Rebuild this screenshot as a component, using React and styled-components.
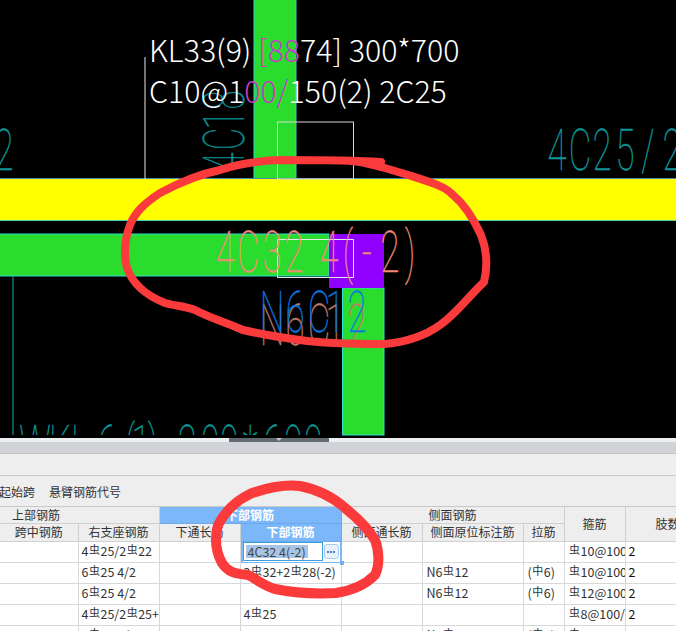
import React from "react";
import styled, { createGlobalStyle } from "styled-components";

const Global = createGlobalStyle`
  html, body { margin: 0; padding: 0; background: #fff; }
  body { font-family: "Noto Sans CJK SC", "Noto Sans", sans-serif; }
`;
const Page = styled.div`
  position: relative;
  width: 676px;
  height: 631px;
  overflow: hidden;
  display: flex;
  flex-direction: column;
`;
const Canvas = styled.svg`
  display: block;
  flex: none;
  width: 676px;
  height: 438px;
  background: #000;
`;
const Splitter = styled.div`
  flex: none;
  height: 4px;
  background: #eeeff1;
  display: flex;
  justify-content: center;
  padding-right: 118px;
`;
const Grip = styled.div`
  width: 100px;
  height: 4px;
  background: #626a72;
  display: flex;
  justify-content: center;
`;
const GripArrow = styled.div`
  width: 0;
  height: 0;
  border-left: 3px solid transparent;
  border-right: 3px solid transparent;
  border-top: 3px solid #c4c6ca;
`;
const TabStrip = styled.div`
  flex: none;
  height: 11px;
  background: #d2d3d8;
  border-bottom: 1px solid #c4c4c4;
`;
const Band = styled.div`
  flex: none;
  height: 21px;
  background: #efefef;
  border-bottom: 1px solid #c8c8c8;
`;
const Toolbar = styled.div`
  flex: none;
  height: 30px;
  background: #eeeeee;
  border-bottom: 1px solid #c8c8c8;
  display: flex;
  align-items: center;
  gap: 14px;
  font-size: 12px;
  color: #333;
  overflow: hidden;
`;
const ToolItem = styled.span`
  white-space: nowrap;
  margin-left: ${(p) => p.$ml || 0}px;
`;
const Sheet = styled.div`
  flex: 1;
  display: grid;
  grid-template-columns: 78.5px 81px 81px 101px 81px 101px 41px 61px 85px;
  grid-template-rows: 17px 17.5px repeat(5, 21px);
  font-size: 12px;
  line-height: 1;
  color: #333;
  background: #fff;
`;
const Head = styled.div`
  grid-column: ${(p) => p.$col || "auto"};
  grid-row: ${(p) => p.$row || "auto"};
  background: ${(p) => (p.$active ? "#7cb8f9" : "#eeeeee")};
  color: ${(p) => (p.$active ? "#fff" : "#333")};
  font-weight: ${(p) => (p.$active ? 700 : 400)};
  border-right: 1px solid ${(p) => (p.$active ? "#6aa9ee" : "#d0d0d0")};
  border-bottom: 1px solid ${(p) => (p.$active ? "#6aa9ee" : "#d0d0d0")};
  display: flex;
  align-items: center;
  justify-content: ${(p) => (p.$left ? "flex-start" : "center")};
  padding-left: ${(p) => p.$left || 0}px;
  white-space: nowrap;
  overflow: hidden;
`;
const Cell = styled.div`
  border-right: 1px solid #d8d8d8;
  border-bottom: 1px solid #d8d8d8;
  display: flex;
  align-items: center;
  padding-left: ${(p) => p.$pad}px;
  white-space: nowrap;
  overflow: hidden;
  font-size: 12.5px;
  color: ${(p) => (p.$dark ? "#111" : "#333")};
`;
const Rebar = styled.span`
  font-size: 11px;
  position: relative;
  top: -2px;
  margin: 0 0.5px;
`;
const EditCell = styled.div`
  position: relative;
  background: #fff;
  border-left: 2px solid #7cb8f9;
  border-right: 2px solid #7cb8f9;
  border-bottom: 1px solid #7cb8f9;
  display: flex;
  align-items: center;
  gap: 1px;
`;
const EditInput = styled.div`
  width: 80px;
  height: 19px;
  box-sizing: border-box;
  background: #fff;
  border: 1px solid #3f9fd8;
  padding-left: 2px;
  display: flex;
  align-items: center;
`;
const Selected = styled.span`
  background: #a8c4e6;
  color: #444;
  font-size: 12.5px;
  line-height: 13px;
  padding-left: 2px;
  width: 60px;
  white-space: nowrap;
`;
const MoreButton = styled.div`
  width: 15px;
  height: 15px;
  background: #e6f1fc;
  border: 1px solid #a9cdee;
  border-radius: 3px;
  box-sizing: border-box;
  display: flex;
  align-items: center;
  justify-content: center;
  gap: 1px;
`;
const Dot = styled.i`
  width: 2px;
  height: 2px;
  background: #4a7fb8;
`;
const Handle = styled.div`
  position: absolute;
  right: -4px;
  bottom: -3px;
  width: 4px;
  height: 4px;
  background: #6fb1f4;
`;
const Ink = styled.svg`
  position: absolute;
  inset: 0;
  pointer-events: none;
`;

const SX = 0.6;

function CadText({ y, xs, fill, children, rotate }) {
  const chars = String(children);
  const list = xs.map((v) => (v / SX).toFixed(1)).join(" ");
  return (
    <text
      x={list}
      y={0}
      fontSize="58"
      fontFamily="Roboto, Inter, sans-serif"
      fontWeight="100"
      textAnchor="middle"
      fill={fill}
      stroke={fill}
      strokeWidth="0.35"
      transform={rotate ? `translate(${rotate} 0) rotate(-90) scale(${SX} 1)` : `translate(0 ${y}) scale(${SX} 1)`}
    >
      {chars}
    </text>
  );
}

const R = () => <Rebar>虫</Rebar>;
const Tie = () => <>(<Rebar>中</Rebar>6)</>;

const rows = [
  [null, <>4<R />25/2<R />22</>, null, "edit", null, null, null, <><R />10@100</>, "2"],
  [null, <>6<R />25 4/2</>, null, <>2<R />32+2<R />28(-2)</>, null, <>N6<R />12</>, <Tie />, <><R />10@100</>, "2"],
  [null, <>6<R />25 4/2</>, null, null, null, <>N6<R />12</>, <Tie />, <><R />12@100</>, "2"],
  [null, <>4<R />25/2<R />25+</>, null, <>4<R />25</>, null, null, null, <><R />8@100/</>, "2"],
  [null, <>6<R />25 4/2</>, null, null, null, <>N6<R />14</>, <Tie />, <><R />10@100</>, "2"],
];
const pads = [3, 3, 3, 3, 3, 4, 4, 4, 3];

export default function App() {
  return (
    <Page>
      <Global />
      <Canvas viewBox="0 0 676 438">
        <CadText rotate={244} xs={[-162, -139, -120, -100]} fill="#0c8f8f">4C18</CadText>
        <rect x="254" y="-2" width="42" height="181" fill="#29dc2d" stroke="#35d8c0" strokeWidth="1" />
        <rect x="0" y="178.5" width="676" height="41.5" fill="#ffff00" />
        <line x1="0" x2="676" y1="178.5" y2="178.5" stroke="#4f86b0" />
        <line x1="0" x2="676" y1="220.5" y2="220.5" stroke="#3fd8c0" />
        <rect x="-2" y="234" width="331" height="42" fill="#29dc2d" stroke="#30e0d0" strokeWidth="1" />
        <rect x="342.5" y="288" width="41.5" height="147" fill="#29dc2d" stroke="#30e0d0" strokeWidth="1" />
        <rect x="329" y="234" width="55" height="54" fill="#8f00ff" />
        <line x1="13" x2="13" y1="276" y2="435" stroke="#0a7a78" strokeWidth="1.5" />
        <line x1="145" x2="145" y1="57" y2="179" stroke="#e8e8e8" />
        <rect x="277.5" y="122" width="76" height="57" fill="none" stroke="#d8d8d8" />
        <rect x="277.5" y="239.5" width="76" height="38" fill="none" stroke="#e8e8e8" />

        <CadText y={170} xs={[557, 580, 602, 625, 648, 672]} fill="#0c9a9a">4C25/2</CadText>
        <CadText y={170} xs={[4]} fill="#0c9a9a">2</CadText>
        <CadText y={345} xs={[272, 295, 319, 335, 357]} fill="#c07a6a">N6C12</CadText>
        <CadText y={332} xs={[272, 295, 319, 335, 357]} fill="#0a78e0">N6C12</CadText>
        <CadText y={272} xs={[225, 248, 272, 294, 312, 329, 348, 367, 390, 410]} fill="#f08a78">4C32 4(-2)</CadText>
        <CadText y={466} xs={[35, 60, 80, 95, 107, 130, 141, 153, 170, 187, 210, 229, 250, 272, 293, 313]} fill="#0c9a9a">WKL 6(1) 300*600</CadText>
        <rect x="0" y="435" width="342" height="3" fill="#000" />

        <g fontFamily="'Noto Sans CJK SC', sans-serif" fontWeight="300" fontSize="30.3" fill="#fff">
          <text x="149" y="62">KL33(9) <tspan fill="#c83cc8">[88</tspan>74] 300*700</text>
          <text x="149" y="103">C10@1<tspan fill="#c83cc8">00/</tspan>150(2) 2C25</text>
        </g>
      </Canvas>
      <Splitter><Grip><GripArrow /></Grip></Splitter>
      <TabStrip />
      <Band />
      <Toolbar>
        <ToolItem $ml={-1}>起始跨</ToolItem>
        <ToolItem>悬臂钢筋代号</ToolItem>
      </Toolbar>
      <Sheet>
        <Head $col="1 / span 2" $row="1" $left={12}>上部钢筋</Head>
        <Head $col="3 / span 2" $row="1" $active>下部钢筋</Head>
        <Head $col="5 / span 3" $row="1">侧面钢筋</Head>
        <Head $col="8" $row="1 / span 2">箍筋</Head>
        <Head $col="9" $row="1 / span 2">肢数</Head>
        <Head>跨中钢筋</Head>
        <Head>右支座钢筋</Head>
        <Head>下通长筋</Head>
        <Head $active>下部钢筋</Head>
        <Head>侧面通长筋</Head>
        <Head>侧面原位标注筋</Head>
        <Head>拉筋</Head>
        {rows.map((row, r) => (
          <React.Fragment key={r}>
            {row.map((c, i) =>
              c === "edit" ? (
                <EditCell key={i}>
                  <EditInput><Selected>4C32 4(-2)</Selected></EditInput>
                  <MoreButton><Dot /><Dot /><Dot /></MoreButton>
                  <Handle />
                </EditCell>
              ) : (
                <Cell key={i} $pad={pads[i]} $dark={i === 8}>{c}</Cell>
              )
            )}
          </React.Fragment>
        ))}
      </Sheet>
      <Ink width="676" height="631" viewBox="0 0 676 631">
        <g fill="none" stroke="#fb3a3c" strokeLinecap="round" strokeLinejoin="round">
          <path strokeWidth="8" d="M381 162 C350 160 310 160 280 160 C255 161 235 165 220 170 C195 175 175 185 160 193 C145 203 135 212 130 225 C124 240 124 258 127 268 C132 282 145 295 165 303 C175 306 185 306 195 310 C210 318 225 322 243 330 C260 334 285 338 300 340 C320 343 345 344 385 344 C405 342 425 336 440 325 C455 315 470 295 484 282 C488 265 487 250 481 235 C475 222 465 205 453 195 C445 186 430 182 405 174 C390 170 370 162 350 161" />
          <path strokeWidth="10" d="M300 486 C285 484 265 488 250 494 C235 501 225 512 218 525 C214 540 216 552 222 563 C228 572 235 574 248 575 C255 578 262 585 275 589 C295 593 320 594 336 593 C350 591 365 585 375 575 C380 565 379 550 375 540 C368 528 355 516 345 508 C335 499 320 490 300 486" />
        </g>
      </Ink>
    </Page>
  );
}
